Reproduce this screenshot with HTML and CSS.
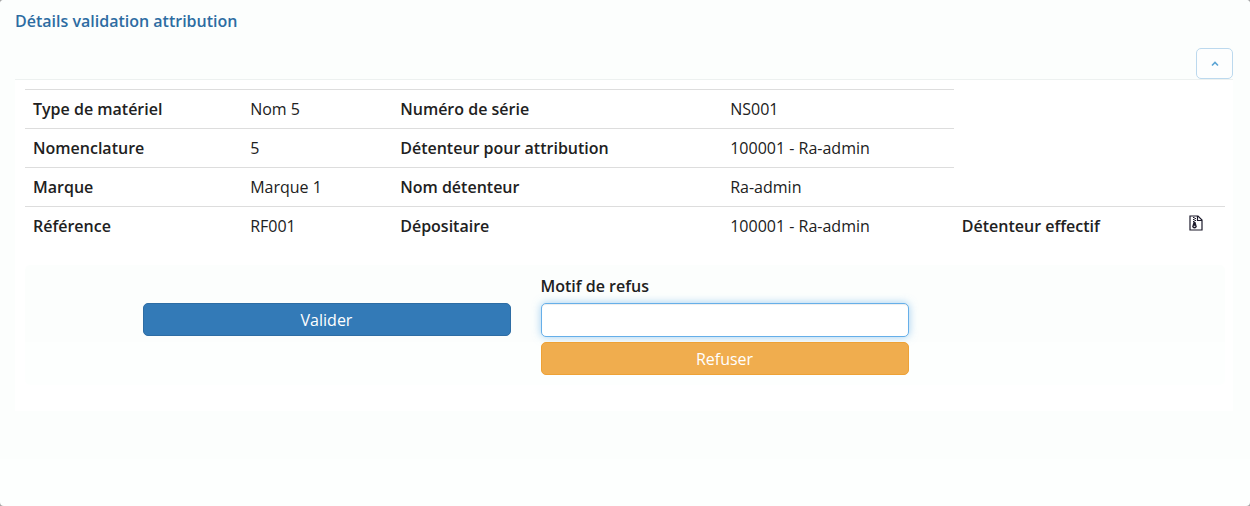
FILE: index.html
```html
<!DOCTYPE html>
<html lang="fr">
<head>
<meta charset="utf-8">
<meta name="viewport" content="width=device-width, initial-scale=1">
<title>Détails validation attribution</title>
<link rel="stylesheet" href="styles.css">
</head>
<body>
<main class="dialog">
  <div class="dialog-body">
    <h1 class="dialog-title">Détails validation attribution</h1>
    <div class="toolbar">
      <button type="button" class="collapse-btn" aria-label="Réduire">
        <svg width="8" height="6" viewBox="0 0 8 6" aria-hidden="true"><path d="M1 4.500 4 1.500 7 4.500" fill="none" stroke="currentColor" stroke-width="1.6"/></svg>
      </button>
    </div>
    <section class="panel">
      <table class="details">
        <colgroup>
          <col class="col-label"><col class="col-value"><col class="col-label-wide"><col class="col-value-wide"><col class="col-extra"><col>
        </colgroup>
        <tbody>
          <tr><th scope="row">Type de matériel</th><td>Nom 5</td><th scope="row">Numéro de série</th><td>NS001</td></tr>
          <tr><th scope="row">Nomenclature</th><td>5</td><th scope="row">Détenteur pour attribution</th><td>100001 - Ra-admin</td></tr>
          <tr><th scope="row">Marque</th><td>Marque 1</td><th scope="row">Nom détenteur</th><td>Ra-admin</td></tr>
          <tr><th scope="row">Référence</th><td>RF001</td><th scope="row">Dépositaire</th><td>100001 - Ra-admin</td><th scope="row">Détenteur effectif</th>
            <td class="file-cell"><a href="#" class="file-link" aria-label="Fichier du détenteur"><svg width="14" height="16" viewBox="0 0 14 16" aria-hidden="true"><path d="M1 1h8l4 4v10H1z" fill="#fff" stroke="currentColor" stroke-width="1.2"/><path d="M8.500 1v4.500H13" fill="none" stroke="currentColor" stroke-width="1.2"/><path d="M4 2h1.500v1H4zM5.500 3H7v1H5.500zM4 4h1.500v1H4zM5.500 5H7v1H5.500zM4 6h1.500v1H4z" fill="currentColor"/><path d="M4.500 7h2l1.200 4.200a2.200 2.200 0 0 1-4.400 0z" fill="currentColor"/><path d="M4.700 11.300h1.600" stroke="#fff" stroke-width="1"/></svg></a></td></tr>
        </tbody>
      </table>
      <form class="decision">
        <div class="accept">
          <button type="button" class="btn btn-primary">Valider</button>
        </div>
        <div class="refuse">
          <label for="motif">Motif de refus</label>
          <input id="motif" type="text" class="field">
          <button type="button" class="btn btn-warning">Refuser</button>
        </div>
      </form>
    </section>
  </div>
</main>
</body>
</html>
```
FILE: styles.css
```css
* { box-sizing: border-box; }
body {
  margin: 0;
  background: #a6a6a6;
  color: #212121;
  font: 16px/22px "Open Sans", "Noto Sans", sans-serif;
}
.dialog {
  min-height: 100vh;
  border-radius: 4px;
  background: #fdfffe;
}
.dialog-body {
  padding: 10px 17px 48px 15px;
  border-radius: 4px 4px 0 0;
  background: #fcfefd;
}
.dialog-title {
  margin: 0;
  color: #2d6ca2;
  font-size: 16px;
  font-weight: 600;
  line-height: 22px;
}
.toolbar {
  display: flex;
  justify-content: flex-end;
  margin-top: 16px;
}
.collapse-btn {
  display: flex;
  align-items: center;
  justify-content: center;
  width: 37px;
  height: 31px;
  padding: 0;
  border: 1px solid #bcd9ee;
  border-radius: 5px;
  background: #fdfefe;
  color: #5ba4d4;
}
.panel {
  padding: 9px 8px 26px 10px;
  border-top: 1px solid #edf1f0;
  background: #fff;
}
.details {
  width: 100%;
  table-layout: fixed;
  border-collapse: collapse;
}
.col-label { width: 18.1%; }
.col-value { width: 12.5%; }
.col-label-wide { width: 27.5%; }
.col-value-wide { width: 19.3%; }
.col-extra { width: 18.9%; }
.details th,
.details td {
  padding: 8px;
  border-top: 1px solid #ddd;
  text-align: left;
  white-space: nowrap;
}
.details th { font-weight: 600; }
.details .file-cell { vertical-align: top; }
.file-link {
  display: flex;
  color: #1c1a2b;
}
.decision {
  display: grid;
  grid-template-columns: repeat(12, 1fr);
  margin-top: 20px;
  padding: 10px 3px;
  border-radius: 5px;
  background: linear-gradient(#fcfefd 64%, #fdfffe 64%);
}
.accept,
.refuse {
  display: flex;
  flex-direction: column;
  padding: 0 15px;
}
.accept {
  grid-column: 2 / span 4;
  padding-top: 28px;
}
.refuse { grid-column: 6 / span 4; }
.refuse label {
  margin-bottom: 6px;
  font-weight: 600;
}
.field {
  width: 100%;
  height: 34px;
  margin-bottom: 5px;
  padding: 6px 12px;
  border: 1px solid #66afe9;
  border-radius: 5px;
  outline: 0;
  background: #fff;
  font: inherit;
  box-shadow: inset 0 1px 1px rgba(0, 0, 0, .075), 0 0 8px rgba(102, 175, 233, .6);
}
.btn {
  height: 33px;
  padding: 0 12px;
  border: 1px solid;
  border-radius: 5px;
  color: #fff;
  font: inherit;
}
.btn-primary {
  border-color: #2e6da4;
  background: #337ab7;
}
.btn-warning {
  border-color: #eea236;
  background: #f0ad4e;
}
```
